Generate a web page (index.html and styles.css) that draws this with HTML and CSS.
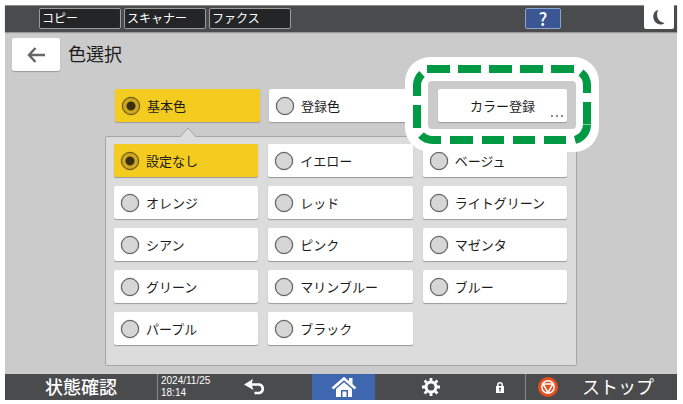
FILE: index.html
```html
<!DOCTYPE html>
<html lang="ja">
	<head>
		<meta charset="UTF-8" />
		<meta name="viewport" content="width=device-width, initial-scale=1.0" />
		<title>色選択</title>
		<link rel="stylesheet" href="styles.css">
	</head>
	<body>
		<div class="screen">
			<header class="top-bar">
				<nav class="tabs">
					<button type="button" class="tab">コピー</button>
					<button type="button" class="tab">スキャナー</button>
					<button type="button" class="tab">ファクス</button>
				</nav>
				<button type="button" class="help">?</button>
				<button type="button" class="sleep" aria-label="スリープ">
					<svg width="12" height="16" viewBox="0 0 12 16">
						<path d="M5.500 0.500C1.500 2 0 5 0.300 8.500C0.800 12.500 4 15.500 7.500 15.500C9 15.500 10.300 15 11.500 14C8 13.500 5.500 11.500 4.500 8.500C3.700 5.500 4 2.800 5.500 0.500Z" fill="#4a4b4d" />
					</svg>
				</button>
			</header>

			<main class="main-content">
				<div class="title-row">
					<button type="button" class="back" aria-label="戻る">
						<svg width="18" height="16" viewBox="0 0 18 16">
							<path d="M8.500 1L2 8L8.500 15M2 8H18" fill="none" stroke="#666" stroke-width="2.400" />
						</svg>
					</button>
					<h1>色選択</h1>
				</div>

				<form class="picker">
					<div class="kinds">
						<label class="choice"><input type="radio" name="kind" checked />基本色</label>
						<label class="choice"><input type="radio" name="kind" />登録色</label>
						<div class="register-wrap">
							<button type="button" class="register">カラー登録
								<svg class="dots" width="12" height="3" viewBox="0 0 12 3">
									<path d="M0 0H2V2H0ZM5 0H7V2H5ZM10 0H12V2H10Z" fill="#8c8c8c" />
								</svg>
							</button>
							<svg class="highlight" width="194" height="95" viewBox="0 0 194 95">
								<path fill="#fff" fill-rule="evenodd" d="M25 0H169A25 25 0 0 1 194 25V70A25 25 0 0 1 169 95H25A25 25 0 0 1 0 70V25A25 25 0 0 1 25 0ZM27 24A4 4 0 0 0 23 28V68A4 4 0 0 0 27 72H167A4 4 0 0 0 171 68V28A4 4 0 0 0 167 24Z" />
								<path fill="none" stroke="#009944" stroke-width="8" d="M22 12H45M53 12H76M84 12H107M115 12H138M146 12H169M176 15.500A16 16 0 0 1 182 28V36M182 45V67M182 67.500A16 16 0 0 1 170 83M161 83H139M130 83H108M99 83H77M68 83H45M36 83H28A16 16 0 0 1 16 78M12 71V48M12 39V28A16 16 0 0 1 17 17" />
							</svg>
						</div>
					</div>

					<div class="panel">
						<svg class="pointer" width="16" height="11" viewBox="0 0 16 11">
							<path d="M0 10L8 1L16 10V11H0Z" fill="#dcdcdc" />
							<path d="M0 10L8 1L16 10" fill="none" stroke="#a6a6a6" />
						</svg>
						<div class="colors">
							<label class="choice"><input type="radio" name="color" checked />設定なし</label>
							<label class="choice"><input type="radio" name="color" />イエロー</label>
							<label class="choice"><input type="radio" name="color" />ベージュ</label>
							<label class="choice"><input type="radio" name="color" />オレンジ</label>
							<label class="choice"><input type="radio" name="color" />レッド</label>
							<label class="choice"><input type="radio" name="color" />ライトグリーン</label>
							<label class="choice"><input type="radio" name="color" />シアン</label>
							<label class="choice"><input type="radio" name="color" />ピンク</label>
							<label class="choice"><input type="radio" name="color" />マゼンタ</label>
							<label class="choice"><input type="radio" name="color" />グリーン</label>
							<label class="choice"><input type="radio" name="color" />マリンブルー</label>
							<label class="choice"><input type="radio" name="color" />ブルー</label>
							<label class="choice"><input type="radio" name="color" />パープル</label>
							<label class="choice"><input type="radio" name="color" />ブラック</label>
						</div>
					</div>
				</form>
			</main>

			<footer class="bottom-bar">
				<button type="button" class="status">状態確認</button>
				<div class="clock">
					<span>2024/11/25</span>
					<span>18:14</span>
				</div>
				<button type="button" class="return" aria-label="リターン">
					<svg width="22" height="16" viewBox="0 0 22 16">
						<path d="M5 5.500H15.500A4.400 4.400 0 0 1 15.500 14H10.500" fill="none" stroke="#fff" stroke-width="2.600" />
						<path d="M0 5.500L9 0L7.500 5.500L9.500 11Z" fill="#fff" />
					</svg>
				</button>
				<button type="button" class="home" aria-label="ホーム">
					<svg width="26" height="20" viewBox="0 0 26 20">
						<path d="M1.500 11.500L13 1.500L24.500 11.500" fill="none" stroke="#fff" stroke-width="2.600" />
						<path d="M18 1H21.500V7.500L18 4.500Z" fill="#fff" />
						<path d="M5 12L13 5.200L21 12V20H17V13H10V20H5ZM11.500 14.500H15.500V20H11.500Z" fill="#fff" />
					</svg>
				</button>
				<button type="button" class="settings" aria-label="設定">
					<svg width="18" height="18" viewBox="0 0 18 18">
						<circle cx="9" cy="9" r="5" fill="none" stroke="#fff" stroke-width="3" />
						<path d="M9 0V3M9 15V18M0 9H3M15 9H18M2.600 2.600L4.700 4.700M13.300 13.300L15.400 15.400M2.600 15.400L4.700 13.300M13.300 4.700L15.400 2.600" stroke="#fff" stroke-width="2.800" />
					</svg>
				</button>
				<button type="button" class="lock" aria-label="ログイン">
					<svg width="8" height="11" viewBox="0 0 8 11">
						<path d="M1.800 5V3A2.200 2.200 0 0 1 6.200 3V5" fill="none" stroke="#fff" stroke-width="1.500" />
						<rect y="4" width="8" height="7" fill="#fff" />
						<path d="M4 5.500V9.500M3 6.500H5" stroke="#4a4b4d" stroke-width="1.200" />
					</svg>
				</button>
				<button type="button" class="stop">
					<svg width="20" height="20" viewBox="0 0 20 20">
						<circle cx="10" cy="10" r="10" fill="#e84e1e" />
						<circle cx="10" cy="10" r="6.200" fill="none" stroke="#fff" stroke-width="1.500" />
						<path d="M5 7H15L10 15.500Z" fill="none" stroke="#fff" stroke-width="1.500" />
					</svg>
					<span>ストップ</span>
				</button>
			</footer>
		</div>
	</body>
</html>
```

FILE: styles.css
```css
:root {
	--bar: #4a4b4d;
	--screen-bg: #cbcbcb;
	--panel-bg: #dcdcdc;
	--edge: #a6a6a6;
	--selected: #f3cc1f;
	--blue: #3f67b0;
	--text: #1c1c1c;
}
* {
	box-sizing: border-box;
}
body {
	margin: 0;
	padding: 5px 6px 5px 5px;
	background-color: #fff;
	color: var(--text);
	font-family: "Noto Sans CJK JP", sans-serif;
	font-size: 13px;
	line-height: 20px;
}
button {
	display: flex;
	align-items: center;
	justify-content: center;
	margin: 0;
	padding: 0;
	border: none;
	background: none;
	color: inherit;
	font: inherit;
	cursor: pointer;
}
svg {
	display: block;
	flex-shrink: 0;
}
.screen {
	background-color: var(--screen-bg);
}

/* Top bar */
.top-bar {
	display: flex;
	align-items: flex-start;
	height: 27px;
	padding: 0 3px 0 34px;
	background-color: var(--bar);
	box-shadow: inset 0 1px #8e8e8e, 0 1px 1px #999;
}
.tabs {
	display: flex;
	gap: 3px;
	margin-top: 3px;
}
.tab {
	justify-content: flex-start;
	width: 82px;
	height: 21px;
	padding: 0 0 2px 2px;
	background-color: #232527;
	border: 1px solid #9c9c9c;
	border-radius: 2px;
	color: #fff;
	font-size: 12px;
	line-height: 18px;
}
.help {
	width: 36px;
	height: 21px;
	margin: 3px 83px 0 auto;
	padding-bottom: 2px;
	background-color: #3a5693;
	border: 1px solid #8fa3cc;
	border-radius: 2px;
	color: #fff;
	font-size: 18px;
	font-weight: 500;
	line-height: 18px;
}
.sleep {
	width: 30px;
	height: 24px;
	background-color: #fff;
	border-radius: 0 0 2px 2px;
}

/* Main content */
.main-content {
	padding: 6px 7px 8px;
}
.title-row {
	display: flex;
	align-items: center;
	gap: 8px;
	margin-bottom: 18px;
}
.title-row h1 {
	margin: 0;
	padding-bottom: 3px;
	font-size: 18px;
	font-weight: 400;
	line-height: 28px;
}
.back,
.register,
.choice {
	height: 33px;
	background-color: #fff;
	border-radius: 2px;
	box-shadow: 0 1px 1px #999;
}
.back {
	width: 48px;
}
.picker {
	max-width: 472px;
	margin: 0 auto;
}
.kinds {
	display: flex;
	gap: 9px;
	padding: 0 10px;
	margin-bottom: 14px;
}
.kinds .choice {
	width: 145px;
}
.choice {
	display: flex;
	align-items: center;
	gap: 7px;
	padding-left: 7px;
	white-space: nowrap;
	cursor: pointer;
}
.choice:has(:checked) {
	background-color: var(--selected);
}
.choice input {
	appearance: none;
	width: 18px;
	height: 18px;
	margin: 0;
	background-color: #d6d6d6;
	border: 1px solid #5c5c5c;
	border-radius: 50%;
	box-shadow: 0 0 1px #555;
}
.choice input:checked {
	background: radial-gradient(circle, #3a2f12 4px, #d0a81c 5px);
	border-color: #5c4b12;
}
.register-wrap {
	position: relative;
	width: 129px;
	margin-left: auto;
}
.register {
	position: relative;
	width: 100%;
}
.dots {
	position: absolute;
	right: 4px;
	bottom: 4px;
}
.highlight {
	position: absolute;
	left: -33px;
	top: -32px;
	z-index: 1;
	pointer-events: none;
}
.panel {
	position: relative;
	padding: 7px 9px 20px 8px;
	background-color: var(--panel-bg);
	border: 1px solid var(--edge);
	border-radius: 2px;
}
.pointer {
	position: absolute;
	left: 74px;
	top: -10px;
}
.colors {
	display: grid;
	grid-template-columns: repeat(3, 1fr);
	gap: 9px 10px;
}

/* Bottom bar */
.bottom-bar {
	display: grid;
	grid-template-columns: 152fr 68fr 87fr 63fr 112fr 38fr 152fr;
	height: 26px;
	background-color: var(--bar);
	color: #fff;
}
.status,
.stop {
	font-size: 18px;
	line-height: 22px;
}
.status {
	padding-bottom: 3px;
	font-weight: 500;
}
.clock {
	display: flex;
	flex-direction: column;
	justify-content: center;
	padding-left: 3px;
	border-left: 1px solid #858585;
	font-family: "Liberation Sans", sans-serif;
	font-size: 10px;
	line-height: 12px;
	white-space: nowrap;
}
.return {
	padding-right: 27px;
}
.home {
	background-color: var(--blue);
}
.lock {
	padding-right: 12px;
}
.stop {
	justify-content: flex-start;
	gap: 24px;
	padding-left: 12px;
	border-left: 1px solid #858585;
}
.stop span {
	padding-bottom: 3px;
}
```
